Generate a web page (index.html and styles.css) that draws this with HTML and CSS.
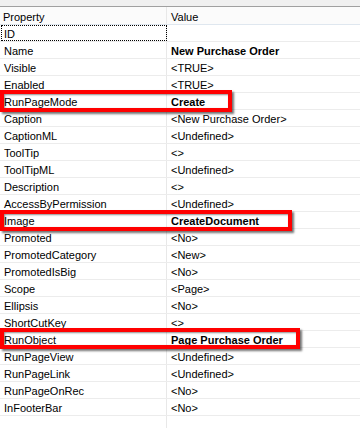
FILE: index.html
```
<!DOCTYPE html>
<html>
<head>
<meta charset="utf-8">
<link rel="stylesheet" href="styles.css">
</head>
<body>
<div class="panel">
  <div class="topbar"></div>
  <div class="grid head">
    <div class="cell key">Property</div>
    <div class="cell val">Value</div>
  </div>
  <div class="rows">
    <div class="grid row"><div class="cell key focus">ID</div><div class="cell val"></div></div>
    <div class="grid row"><div class="cell key">Name</div><div class="cell val bold">New Purchase Order</div></div>
    <div class="grid row"><div class="cell key">Visible</div><div class="cell val">&lt;TRUE&gt;</div></div>
    <div class="grid row"><div class="cell key">Enabled</div><div class="cell val">&lt;TRUE&gt;</div></div>
    <div class="grid row"><div class="cell key">RunPageMode</div><div class="cell val bold">Create</div></div>
    <div class="grid row"><div class="cell key">Caption</div><div class="cell val">&lt;New Purchase Order&gt;</div></div>
    <div class="grid row"><div class="cell key">CaptionML</div><div class="cell val">&lt;Undefined&gt;</div></div>
    <div class="grid row"><div class="cell key">ToolTip</div><div class="cell val">&lt;&gt;</div></div>
    <div class="grid row"><div class="cell key">ToolTipML</div><div class="cell val">&lt;Undefined&gt;</div></div>
    <div class="grid row"><div class="cell key">Description</div><div class="cell val">&lt;&gt;</div></div>
    <div class="grid row"><div class="cell key">AccessByPermission</div><div class="cell val">&lt;Undefined&gt;</div></div>
    <div class="grid row"><div class="cell key">Image</div><div class="cell val bold">CreateDocument</div></div>
    <div class="grid row"><div class="cell key">Promoted</div><div class="cell val">&lt;No&gt;</div></div>
    <div class="grid row"><div class="cell key">PromotedCategory</div><div class="cell val">&lt;New&gt;</div></div>
    <div class="grid row"><div class="cell key">PromotedIsBig</div><div class="cell val">&lt;No&gt;</div></div>
    <div class="grid row"><div class="cell key">Scope</div><div class="cell val">&lt;Page&gt;</div></div>
    <div class="grid row"><div class="cell key">Ellipsis</div><div class="cell val">&lt;No&gt;</div></div>
    <div class="grid row"><div class="cell key">ShortCutKey</div><div class="cell val">&lt;&gt;</div></div>
    <div class="grid row"><div class="cell key">RunObject</div><div class="cell val bold">Page Purchase Order</div></div>
    <div class="grid row"><div class="cell key">RunPageView</div><div class="cell val">&lt;Undefined&gt;</div></div>
    <div class="grid row"><div class="cell key">RunPageLink</div><div class="cell val">&lt;Undefined&gt;</div></div>
    <div class="grid row"><div class="cell key">RunPageOnRec</div><div class="cell val">&lt;No&gt;</div></div>
    <div class="grid row"><div class="cell key">InFooterBar</div><div class="cell val">&lt;No&gt;</div></div>
    <div class="grid row empty"><div class="cell key"></div><div class="cell val"></div></div>

    <div class="mark mark-mode"></div>
    <div class="mark mark-image"></div>
    <div class="mark mark-object"></div>
  </div>
</div>
</body>
</html>
```
FILE: styles.css
```
html, body {
  margin: 0;
  padding: 0;
  background: #ffffff;
}
body {
  font-family: "Liberation Sans", Arial, sans-serif;
  font-size: 11px;
  color: #000000;
  width: 360px;
  height: 428px;
  overflow: hidden;
}
.panel {
  width: 360px;
}
.topbar {
  height: 6px;
  background: #f0f0f0;
  border-bottom: 1px solid #a0a0a0;
}
.grid {
  display: grid;
  grid-template-columns: 167px 1fr;
  box-sizing: border-box;
  height: 17px;
}
.head {
  height: 18px;
  background: #fbfbfb;
  border-bottom: 1px solid #dfe7ef;
}
.head .cell {
  line-height: 20px;
}
.cell {
  line-height: 18px;
  white-space: nowrap;
  overflow: hidden;
  box-sizing: border-box;
}
.key {
  padding-left: 4px;
  border-right: 1px solid #e8e8e8;
}
.val {
  padding-left: 4px;
}
.head .key {
  padding-left: 3px;
}
.rows {
  position: relative;
}
.row {
  border-bottom: 1px solid #ececec;
}
.row.empty {
  height: 13px;
}
.bold {
  font-weight: bold;
}
.focus {
  outline: 1px dotted #000000;
  outline-offset: -1px;
  padding-left: 3px;
  margin-left: 1px;
}
.mark {
  position: absolute;
  left: 0;
  height: 22px;
  box-sizing: border-box;
  border: 4px solid #ff0000;
  box-shadow: 2px 2px 2px rgba(0, 0, 0, 0.55), inset 1px 1px 2px rgba(0, 0, 0, 0.45);
}
.mark-mode {
  top: 65px;
  width: 232px;
}
.mark-image {
  top: 185px;
  width: 292px;
  height: 21px;
}
.mark-object {
  top: 303px;
  width: 300px;
  height: 21px;
}
```
